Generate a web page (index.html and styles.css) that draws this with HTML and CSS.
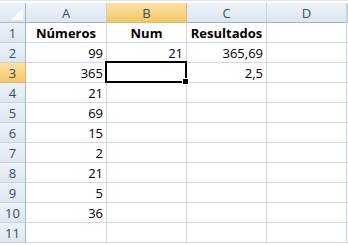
FILE: index.html
```html
<!DOCTYPE html>
<html>
<head>
<meta charset="utf-8">
<link rel="stylesheet" href="styles.css">
</head>
<body>
<div class="sheet">
  <div class="hd corner"><span class="tri"></span></div>
  <div class="hd col">A</div>
  <div class="hd col sel">B</div>
  <div class="hd col">C</div>
  <div class="hd col">D</div>
  <div class="hd col last"></div>

  <div class="hd row">1</div>
  <div class="c b">Números</div>
  <div class="c b">Num</div>
  <div class="c b">Resultados</div>
  <div class="c"></div>
  <div class="c last"></div>

  <div class="hd row">2</div>
  <div class="c n">99</div>
  <div class="c n">21</div>
  <div class="c n">365,69</div>
  <div class="c"></div>
  <div class="c last"></div>

  <div class="hd row sel">3</div>
  <div class="c n">365</div>
  <div class="c active"><span class="box"><span class="handle"></span></span></div>
  <div class="c n">2,5</div>
  <div class="c"></div>
  <div class="c last"></div>

  <div class="hd row">4</div>
  <div class="c n">21</div>
  <div class="c"></div><div class="c"></div><div class="c"></div><div class="c last"></div>

  <div class="hd row">5</div>
  <div class="c n">69</div>
  <div class="c"></div><div class="c"></div><div class="c"></div><div class="c last"></div>

  <div class="hd row">6</div>
  <div class="c n">15</div>
  <div class="c"></div><div class="c"></div><div class="c"></div><div class="c last"></div>

  <div class="hd row">7</div>
  <div class="c n">2</div>
  <div class="c"></div><div class="c"></div><div class="c"></div><div class="c last"></div>

  <div class="hd row">8</div>
  <div class="c n">21</div>
  <div class="c"></div><div class="c"></div><div class="c"></div><div class="c last"></div>

  <div class="hd row">9</div>
  <div class="c n">5</div>
  <div class="c"></div><div class="c"></div><div class="c"></div><div class="c last"></div>

  <div class="hd row">10</div>
  <div class="c n">36</div>
  <div class="c"></div><div class="c"></div><div class="c"></div><div class="c last"></div>

  <div class="hd row">11</div>
  <div class="c"></div><div class="c"></div><div class="c"></div><div class="c"></div><div class="c last"></div>
</div>
</body>
</html>
```
FILE: styles.css
```css
html, body {
  margin: 0;
  padding: 0;
  background: #ffffff;
  overflow: hidden;
}
.sheet {
  display: grid;
  grid-template-columns: 26px 81px 80px 80px 80px 1px;
  grid-auto-rows: 20px;
  grid-template-rows: 20px;
  padding-top: 2px;
  font-family: "Open Sans", "Liberation Sans", sans-serif;
  font-size: 13px;
  color: #000;
  border-top: 1px solid #dde5ef;
}
.hd {
  box-sizing: border-box;
  background: linear-gradient(#eef3fa, #dce5f1);
  border-right: 1px solid #9eb6ce;
  border-bottom: 1px solid #9eb6ce;
  color: #3b4d63;
  display: flex;
  align-items: center;
  justify-content: center;
  font-size: 13px;
}
.hd.col {
  border-right: 1px solid #c5d2e0;
}
.hd.row {
  border-bottom: 1px solid #c5d2e0;
  border-right: 1px solid #9eb6ce;
}
.hd.sel {
  background: linear-gradient(#fbe2a7, #f4c769);
  border-color: #f2b646;
}
.corner {
  position: relative;
  border-right: 1px solid #9eb6ce;
}
.tri {
  position: absolute;
  right: 2px;
  bottom: 2px;
  width: 0;
  height: 0;
  border-left: 12px solid transparent;
  border-bottom: 12px solid #ffffff;
  opacity: 0.85;
}
.c {
  box-sizing: border-box;
  border-right: 1px solid #d0d7e5;
  border-bottom: 1px solid #d0d7e5;
  display: flex;
  align-items: center;
  padding: 0 3px;
  white-space: nowrap;
}
.c.b {
  font-weight: bold;
  justify-content: center;
}
.c.n {
  justify-content: flex-end;
}
.c.last {
  border-right: none;
}
.active {
  position: relative;
}
.box {
  position: absolute;
  left: -2px;
  top: -2px;
  right: -1px;
  bottom: -1px;
  border: 2px solid #000;
}
.handle {
  position: absolute;
  right: -4px;
  bottom: -4px;
  width: 5px;
  height: 5px;
  background: #000;
  border: 1px solid #fff;
}
```
